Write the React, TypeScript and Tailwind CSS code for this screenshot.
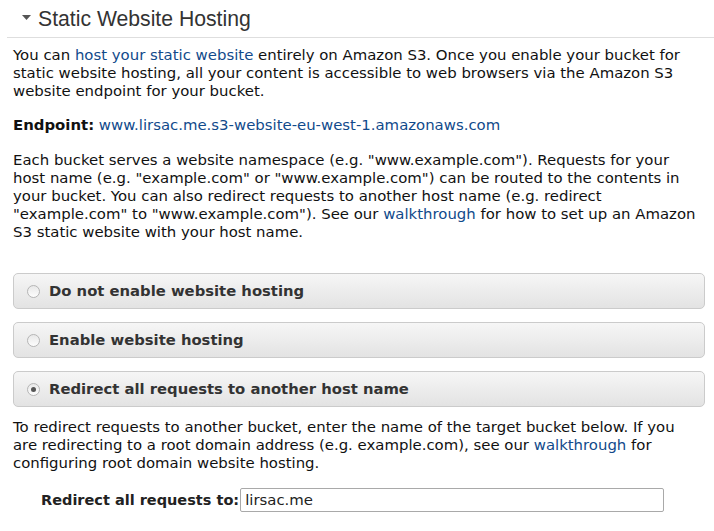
import React, { useState } from "react";

const Link = ({ children }: { children: React.ReactNode }) => (
  <a href="#" className="text-[#114a8b]">
    {children}
  </a>
);

const RadioPanel = ({
  label,
  checked,
  onSelect,
}: {
  label: string;
  checked: boolean;
  onSelect: () => void;
}) => (
  <label
    onClick={onSelect}
    className="flex h-[36px] cursor-pointer items-center rounded-[5px] border border-[#cbcbcb] bg-gradient-to-b from-[#f6f6f6] to-[#e3e3e3] pl-[13px]"
  >
    <span className="flex h-[13px] w-[13px] items-center justify-center rounded-full border border-[#b5b5b5] bg-gradient-to-b from-[#e8e8e8] to-[#fdfdfd]">
      {checked && <span className="h-[5px] w-[5px] rounded-full bg-[#555]" />}
    </span>
    <span className="ml-[9px] text-[14.8px] font-bold text-[#333]">{label}</span>
  </label>
);

export default function App() {
  const [mode, setMode] = useState("redirect");

  return (
    <div className="h-[531px] w-[714px] overflow-hidden bg-white font-['DejaVu_Sans',Verdana,sans-serif] text-[14.9px] leading-[18px] text-[#111]">
      {/* titre */}
      <div className="ml-[7px] flex h-[38px] items-center border-b border-[#dedede] pl-[15px]">
        <svg width="9" height="5" viewBox="0 0 9 5" className="mb-[2px]">
          <path d="M0 0h9L4.5 5z" fill="#555" />
        </svg>
        <h2 className="ml-[7px] font-['Liberation_Sans',Arial,sans-serif] text-[21.2px] text-[#333]">
          Static Website Hosting
        </h2>
      </div>

      <div className="px-[13px] pt-[8px]">
        <p>
          You can <Link>host your static website</Link> entirely on Amazon S3. Once you enable your bucket for
          static website hosting, all your content is accessible to web browsers via the Amazon S3 website
          endpoint for your bucket.
        </p>
        <p className="mt-[16px]">
          <b>Endpoint:</b> <Link>www.lirsac.me.s3-website-eu-west-1.amazonaws.com</Link>
        </p>
        <p className="mt-[17px]">
          Each bucket serves a website namespace (e.g. "www.example.com"). Requests for your host name (e.g.
          "example.com" or "www.example.com") can be routed to the contents in your bucket. You can also
          redirect requests to another host name (e.g. redirect "example.com" to "www.example.com"). See our{" "}
          <Link>walkthrough</Link> for how to set up an Amazon S3 static website with your host name.
        </p>

        <div className="mt-[32px] mr-[-4px] flex flex-col gap-[13px]">
          <RadioPanel
            label="Do not enable website hosting"
            checked={mode === "none"}
            onSelect={() => setMode("none")}
          />
          <RadioPanel
            label="Enable website hosting"
            checked={mode === "enable"}
            onSelect={() => setMode("enable")}
          />
          <RadioPanel
            label="Redirect all requests to another host name"
            checked={mode === "redirect"}
            onSelect={() => setMode("redirect")}
          />
        </div>

        <p className="mt-[11px]">
          To redirect requests to another bucket, enter the name of the target bucket below. If you are
          redirecting to a root domain address (e.g. example.com), see our <Link>walkthrough</Link> for
          configuring root domain website hosting.
        </p>

        <div className="mt-[16px] flex items-center pl-[28px]">
          <span className="text-[14.5px] font-bold text-[#222]">Redirect all requests to:</span>
          <input
            defaultValue="lirsac.me"
            className="ml-[1px] h-[24px] w-[424px] rounded-[2px] border border-[#a9a9a9] px-[4px] text-[14.9px] text-[#222] outline-none"
          />
        </div>
      </div>
    </div>
  );
}
